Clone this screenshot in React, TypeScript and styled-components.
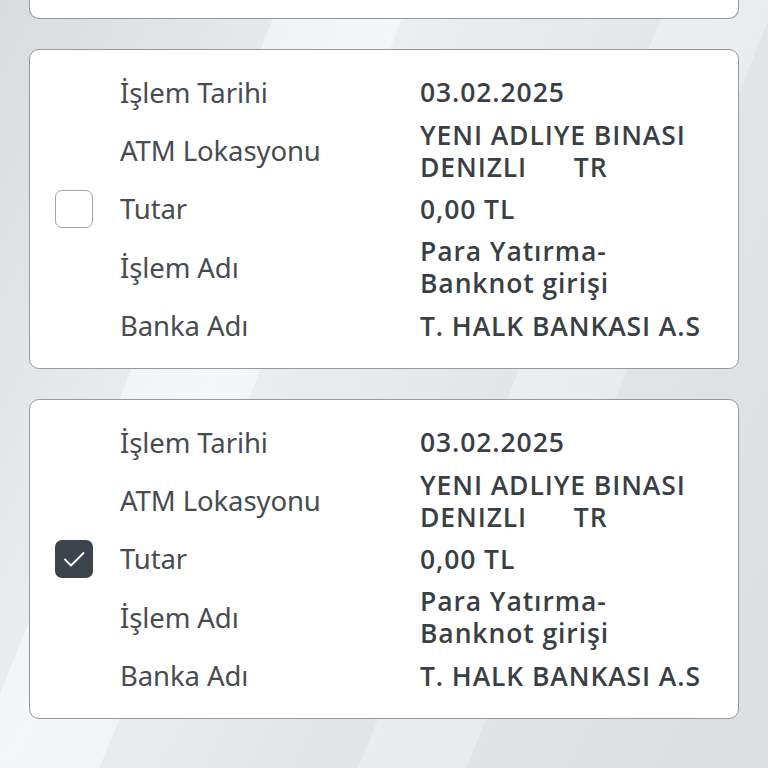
import React from "react";
import styled, { createGlobalStyle } from "styled-components";

const GlobalStyle = createGlobalStyle`
  html, body {
    margin: 0;
    padding: 0;
    height: 768px;
    overflow: hidden;
  }
  body {
    background-color: #e2e4e6;
    background-image:
      linear-gradient(112deg, transparent 0 26%, rgba(255,255,255,0.45) 26% 38%, transparent 38% 62%, rgba(255,255,255,0.3) 62% 72%, transparent 72%),
      linear-gradient(118deg, #d9dbdd 0%, #eceef0 35%, #e3e5e7 60%, #dcdee0 100%);
    font-family: "Open Sans", "Noto Sans", sans-serif;
  }
`;

const Page = styled.div`
  display: flex;
  flex-direction: column;
  gap: 30px;
  padding: 0 29px;
`;

const CardStub = styled.div`
  box-sizing: border-box;
  height: 19px;
  background: #fff;
  border: 1.5px solid #979899;
  border-top: none;
  border-radius: 0 0 10px 10px;
`;

const Card = styled.div`
  box-sizing: border-box;
  display: flex;
  align-items: center;
  height: 320px;
  background: #fff;
  border: 1.5px solid #979899;
  border-radius: 10px;
  padding: 0 0 0 25px;
`;

const Check = styled.div<{ $checked?: boolean }>`
  flex: none;
  width: 38px;
  height: 38px;
  box-sizing: border-box;
  border-radius: 7px;
  border: ${(p) => (p.$checked ? "none" : "1.5px solid #a3a4a5")};
  background: ${(p) => (p.$checked ? "#3d434a" : "#fff")};
  display: flex;
  align-items: center;
  justify-content: center;
`;

const Rows = styled.div`
  display: grid;
  grid-template-columns: 300px 1fr;
  grid-template-rows: repeat(5, 58.4px);
  margin-left: 27px;
  flex: 1;
`;

const Label = styled.div`
  display: flex;
  align-items: center;
  font-family: "Noto Sans", sans-serif;
  font-size: 27.5px;
  color: #474c52;
  letter-spacing: -0.1px;
`;

const Value = styled.div`
  display: flex;
  align-items: center;
  font-family: "Open Sans", sans-serif;
  font-weight: 600;
  font-size: 26.5px;
  line-height: 32px;
  letter-spacing: 0.9px;
  color: #3a3f45;
  white-space: pre-wrap;
`;

type Item = { label: string; value: string };

const items: Item[] = [
  { label: "İşlem Tarihi", value: "03.02.2025" },
  { label: "ATM Lokasyonu", value: "YENI ADLIYE BINASI\nDENIZLI      TR" },
  { label: "Tutar", value: "0,00 TL" },
  { label: "İşlem Adı", value: "Para Yatırma-\nBanknot girişi" },
  { label: "Banka Adı", value: "T. HALK BANKASI A.S" },
];

const TxCard: React.FC<{ checked?: boolean }> = ({ checked }) => (
  <Card>
    <Check $checked={checked}>
      {checked && (
        <svg width="28" height="28" viewBox="0 0 28 28" fill="none">
          <path d="M5 14.5l6 6L23.5 8" stroke="#fff" strokeWidth="1.8" strokeLinecap="round" strokeLinejoin="round" />
        </svg>
      )}
    </Check>
    <Rows>
      {items.map((it) => (
        <React.Fragment key={it.label}>
          <Label>{it.label}</Label>
          <Value>{it.value}</Value>
        </React.Fragment>
      ))}
    </Rows>
  </Card>
);

export default function App() {
  return (
    <>
      <GlobalStyle />
      <Page>
        <CardStub />
        <TxCard />
        <TxCard checked />
      </Page>
    </>
  );
}
